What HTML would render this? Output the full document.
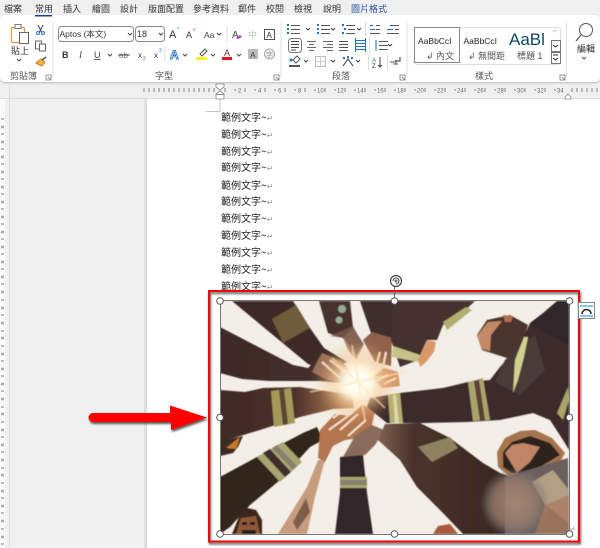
<!DOCTYPE html>
<html><head><meta charset="utf-8">
<style>
html,body{margin:0;padding:0;background:#f0f0f0}
#p{position:relative;width:600px;height:548px;overflow:hidden;background:#f0f0f0;font-family:"Liberation Sans","Noto Sans CJK TC",sans-serif}
svg{position:absolute;left:0;top:0}
text{font-family:"Liberation Sans","Noto Sans CJK TC",sans-serif}
.t{font-size:9px;fill:#333}
.g{font-size:9px;fill:#555}
.l{position:absolute;left:221px;font-size:10px;line-height:14px;color:#222;white-space:nowrap;font-family:"Noto Sans CJK TC",sans-serif}
.l i{font-style:normal;color:#999;font-size:8px}
</style></head><body><div id="p">
<div style="position:absolute;left:0;top:15px;width:600px;height:67px;background:#fff;border-radius:5px;box-shadow:0 1px 2px #bbb"></div>
<div style="position:absolute;left:146px;top:99px;width:454px;height:449px;background:#fff;border-left:1px solid #d8d8d8"></div>
<div style="position:absolute;left:144px;top:99px;width:2px;height:449px;background:#e0e0e0"></div>
<div style="position:absolute;left:9px;top:84px;width:1px;height:464px;background:#dcdcdc"></div>
<div style="position:absolute;left:0;top:98px;width:600px;height:1px;background:#dcdcdc"></div>
<div style="position:absolute;left:0;top:99px;width:5px;height:449px;background:#fafafa"></div>
<div class="l" style="top:110px">範例文字~<i>↵</i></div>
<div class="l" style="top:127px">範例文字~<i>↵</i></div>
<div class="l" style="top:144px">範例文字~<i>↵</i></div>
<div class="l" style="top:160px">範例文字~<i>↵</i></div>
<div class="l" style="top:178px">範例文字~<i>↵</i></div>
<div class="l" style="top:194px">範例文字~<i>↵</i></div>
<div class="l" style="top:211px">範例文字~<i>↵</i></div>
<div class="l" style="top:228px">範例文字~<i>↵</i></div>
<div class="l" style="top:245px">範例文字~<i>↵</i></div>
<div class="l" style="top:262px">範例文字~<i>↵</i></div>
<div class="l" style="top:279px;height:11px;overflow:hidden">範例文字~<i>↵</i></div>

<svg width="600" height="548" viewBox="0 0 600 548" xmlns="http://www.w3.org/2000/svg">
<defs>
<filter id="b1"><feGaussianBlur stdDeviation="0.6"/></filter>
<filter id="b2"><feGaussianBlur stdDeviation="2"/></filter>
<filter id="b4"><feGaussianBlur stdDeviation="5"/></filter>
<filter id="sh" x="-10%" y="-30%" width="120%" height="170%"><feDropShadow dx="1" dy="2" stdDeviation="1" flood-color="#555"/></filter>
<radialGradient id="glow"><stop offset="0" stop-color="#fffdf5"/><stop offset=".35" stop-color="#fff3d5" stop-opacity=".95"/><stop offset=".7" stop-color="#f5bd7e" stop-opacity=".45"/><stop offset="1" stop-color="#e8a060" stop-opacity="0"/></radialGradient>
<radialGradient id="flare"><stop offset="0" stop-color="#ad8a74" stop-opacity=".9"/><stop offset=".7" stop-color="#967c6e" stop-opacity=".8"/><stop offset="1" stop-color="#77757a" stop-opacity=".2"/></radialGradient>
<linearGradient id="armC" x1="0" x2="1"><stop offset="0" stop-color="#3f2a26"/><stop offset=".55" stop-color="#4b302a"/><stop offset="1" stop-color="#c08a60"/></linearGradient>
<linearGradient id="armB" x1="0" x2="1"><stop offset="0" stop-color="#3d2926"/><stop offset=".7" stop-color="#44302b"/><stop offset="1" stop-color="#96705a"/></linearGradient>
<linearGradient id="armH" x1="0" x2="1"><stop offset="0" stop-color="#806252"/><stop offset=".25" stop-color="#4b342c"/><stop offset="1" stop-color="#38251f"/></linearGradient>
<clipPath id="pic"><rect x="220" y="301" width="349" height="233"/></clipPath>
</defs>

<!-- tabs -->
<text x="4" y="12" class="t">檔案</text><text x="35" y="12" class="t">常用</text><text x="63" y="12" class="t">插入</text><text x="92" y="12" class="t">繪圖</text><text x="120" y="12" class="t">設計</text><text x="148" y="12" class="t">版面配置</text><text x="193" y="12" class="t">參考資料</text><text x="238" y="12" class="t">郵件</text><text x="266" y="12" class="t">校閱</text><text x="294" y="12" class="t">檢視</text><text x="323" y="12" class="t">說明</text><text x="351" y="12" style="font-size:9px;fill:#1c4fa8">圖片格式</text>
<rect x="35" y="15" width="17" height="1.5" fill="#1c3f94"/>

<!-- clipboard -->
<rect x="11.500" y="27.500" width="13" height="15" rx="1" fill="#fff" stroke="#e29a3c" stroke-width="1.2"/>
<rect x="15" y="24.500" width="6" height="4" fill="#fff" stroke="#777"/>
<rect x="19.500" y="32.500" width="9" height="11" fill="#fff" stroke="#666"/>
<text x="11" y="54" class="t">貼上</text><path d="M17 59l2 2 2-2" fill="none" stroke="#555"/>
<path d="M38 25l4 8M43 25l-4 8" stroke="#444" fill="none"/><circle cx="38" cy="33" r="1.5" fill="none" stroke="#2a78c8"/><circle cx="43" cy="33" r="1.5" fill="none" stroke="#2a78c8"/>
<rect x="35.500" y="41" width="6" height="8" fill="#fff" stroke="#666"/><rect x="39.500" y="44" width="6" height="7" fill="#fff" stroke="#666"/>
<path d="M36 63l5-4 4 3-3 4z" fill="#f2b24b" stroke="#d67a1e"/><path d="M42 60l4-3" stroke="#555" stroke-width="1.5"/>
<text x="10" y="79" class="g">剪貼簿</text>
<path d="M46 75h5v5h-5zM48 77l3 3" fill="none" stroke="#777" stroke-width=".8"/>
<line x1="53" y1="22" x2="53" y2="78" stroke="#e2e2e2"/>

<!-- font -->
<rect x="58.500" y="26.500" width="75" height="15" rx="3" fill="#fff" stroke="#8a8a8a"/>
<text x="59.500" y="37" style="font-size:8.500px;fill:#333">Aptos (本文)</text>
<path d="M128 33l2 2 2-2" fill="none" stroke="#444"/>
<rect x="135.500" y="26.500" width="29" height="15" rx="3" fill="#fff" stroke="#8a8a8a"/>
<text x="137" y="37" style="font-size:9px;fill:#333">18</text><path d="M159 33l2 2 2-2" fill="none" stroke="#444"/>
<text x="169" y="38" style="font-size:11px;fill:#333">A</text><text x="177" y="31" style="font-size:5px;fill:#2a78c8">^</text>
<text x="186" y="38" style="font-size:9px;fill:#333">A</text><text x="193" y="31" style="font-size:5px;fill:#2a78c8">v</text>
<text x="204" y="38" style="font-size:8.500px;fill:#444">Aa</text><path d="M217 33l2 2 2-2" fill="none" stroke="#444"/>
<line x1="227" y1="26" x2="227" y2="42" stroke="#ddd"/>
<text x="232" y="38" style="font-size:10px;fill:#444">A</text><path d="M236 38l4-3 2 2-4 2z" fill="#a23fb5"/>
<text x="248" y="38" style="font-size:9px;fill:#bbb">中</text>
<rect x="264.500" y="29.500" width="10" height="10" fill="#fff" stroke="#555"/><text x="266.500" y="38" style="font-size:8px;fill:#333">A</text>
<text x="62" y="58" style="font-size:9px;font-weight:bold;fill:#333">B</text>
<text x="79" y="58" style="font-size:9px;font-style:italic;fill:#444;font-family:'Liberation Serif'">I</text>
<text x="94" y="58" style="font-size:9px;fill:#444;text-decoration:underline">U</text><path d="M108 54l2 2 2-2" fill="none" stroke="#444"/>
<text x="119" y="58" style="font-size:8px;fill:#777">ab</text><line x1="118" y1="55" x2="130" y2="55" stroke="#444"/>
<text x="138" y="58" style="font-size:8px;fill:#333">x</text><text x="143" y="60" style="font-size:5px;fill:#2a78c8">2</text>
<text x="154" y="58" style="font-size:8px;fill:#333">x</text><text x="159" y="52" style="font-size:5px;fill:#2a78c8">2</text>
<line x1="165" y1="47" x2="165" y2="62" stroke="#ddd"/>
<text x="170" y="59" style="font-size:12px;font-weight:bold;fill:#fff;stroke:#2a78c8;stroke-width:.9">A</text><path d="M183 54l2 2 2-2" fill="none" stroke="#444"/>
<path d="M200 54l5-5 2 2-5 5z" fill="#fff" stroke="#555"/><rect x="196" y="57" width="11" height="3" fill="#ffee22"/><path d="M211 54l2 2 2-2" fill="none" stroke="#444"/>
<text x="224" y="56" style="font-size:9px;fill:#444">A</text><rect x="222" y="57" width="10" height="3" fill="#e8101c"/><path d="M237 54l2 2 2-2" fill="none" stroke="#444"/>
<rect x="248" y="49" width="10" height="10" fill="#bdbdbd"/><text x="250" y="58" style="font-size:8.500px;fill:#444">A</text>
<circle cx="269.500" cy="54" r="5" fill="#eee" stroke="#aaa"/><text x="266" y="57" style="font-size:7px;fill:#999">字</text>
<text x="155" y="79" class="g">字型</text>
<path d="M274 75h5v5h-5zM276 77l3 3" fill="none" stroke="#777" stroke-width=".8"/>
<line x1="281" y1="22" x2="281" y2="78" stroke="#e2e2e2"/>

<!-- paragraph -->
<g fill="none" stroke-width="1">
<path d="M291 25.500h9M291 29.500h9M291 33.500h9" stroke="#555"/><path d="M287 25h2M287 29h2M287 33h2" stroke="#1a73c8" stroke-width="2"/>
<path d="M321 25.500h9M321 29.500h9M321 33.500h9" stroke="#555"/><path d="M317 25h2M317 29h2M317 33h2" stroke="#1a73c8" stroke-width="2"/>
<path d="M346 25.500h9M348 29.500h7M346 33.500h9" stroke="#555"/><path d="M342 25h2M344 29h2M342 33h2" stroke="#1a73c8" stroke-width="2"/>
<path d="M331 28l2 2 2-2M306 28l2 2 2-2M357 28l2 2 2-2" stroke="#444"/>
<line x1="365.500" y1="22" x2="365.500" y2="36" stroke="#ddd"/>
<path d="M376 25.500h4M376 29.500h4M370 33.500h10M370 25.500h3" stroke="#555"/><path d="M370 29.500h5" stroke="#1a73c8"/>
<path d="M390 25.500h9M395 29.500h4M387 33.500h12" stroke="#555"/><path d="M387 29.500h6" stroke="#1a73c8"/>
<rect x="288.500" y="38.500" width="13" height="14" rx="3" fill="#fff" stroke="#777"/><path d="M291 41.500h8M291 44.500h8M291 47.500h8M291 50h5" stroke="#444"/>
<path d="M307 41.500h9M309 44.500h5M307 47.500h9M309 50.500h5" stroke="#666"/>
<path d="M323 41.500h10M327 44.500h6M323 47.500h10M327 50.500h6" stroke="#666"/>
<path d="M339 41.500h9M339 44.500h9M339 47.500h9M339 50.500h9" stroke="#555"/>
<path d="M356 40.500h9M356 43.500h9M356 46.500h9M356 49.500h9" stroke="#1a73c8"/><path d="M355.500 38v14M365.500 38v14" stroke="#1a73c8"/>
<line x1="369.500" y1="37" x2="369.500" y2="54" stroke="#ddd"/>
<path d="M379 41.500h9M379 45.500h9M379 49.500h9" stroke="#555"/><path d="M376 40v11" stroke="#1a73c8"/>
<path d="M388 44l2 2 2-2" stroke="#444"/>
<path d="M293 60l4-4 3 3-4 4z" stroke="#555"/><path d="M289 66h11" stroke="#555" stroke-width="2"/><circle cx="291" cy="60" r="1.500" fill="#1a73c8"/>
<path d="M304 60l2 2 2-2" stroke="#444"/>
<rect x="315.500" y="56.500" width="10" height="10" stroke="#bbb"/><path d="M315 61.500h11M320.500 56v11" stroke="#ccc"/>
<path d="M331 60l2 2 2-2" stroke="#444"/>
<path d="M343 66l5-7 5 7" stroke="#333"/><path d="M343 58h2M351 58h2M347 57h2" stroke="#1a73c8" stroke-width="2"/>
<path d="M356 60l2 2 2-2" stroke="#444"/>
<line x1="368.500" y1="55" x2="368.500" y2="70" stroke="#ddd"/>
<path d="M380 57v10M378 65l2 2 2-2" stroke="#444"/>
<line x1="387.500" y1="55" x2="387.500" y2="70" stroke="#ddd"/>
<path d="M390 62h5M396 60v4h-3M394 64h4" stroke="#555"/><path d="M400 57v4h-5" stroke="#333"/>
</g>
<text x="372" y="62" style="font-size:6px;fill:#1a73c8">A</text><text x="372" y="68" style="font-size:6px;fill:#333">Z</text>
<text x="332" y="79" class="g">段落</text>
<path d="M400 75h5v5h-5zM402 77l3 3" fill="none" stroke="#777" stroke-width=".8"/>
<line x1="407" y1="22" x2="407" y2="78" stroke="#e2e2e2"/>

<!-- styles -->
<rect x="414.500" y="27.500" width="146" height="37" rx="3" fill="#fff" stroke="#ddd"/>
<rect x="414.500" y="27.500" width="45" height="35" fill="#fff" stroke="#888" stroke-width="1"/>
<text x="418" y="44" style="font-size:8.500px;fill:#222">AaBbCcI</text>
<text x="463.500" y="44" style="font-size:8.500px;fill:#222">AaBbCcI</text>
<text x="509" y="45" style="font-size:17px;fill:#0f4761">AaBl</text>
<text x="426" y="59" class="g">↲ 內文</text>
<text x="468" y="59" class="g">↲ 無間距</text>
<text x="517" y="59" class="g">標題 1</text>
<path d="M553 32l2-2 2 2" fill="none" stroke="#ccc"/>
<rect x="551.500" y="40.500" width="9" height="11" fill="#fff" stroke="#777"/><path d="M553 45l2.500 2 2.500-2" fill="none" stroke="#333"/>
<rect x="551.500" y="52.500" width="9" height="11" fill="#fff" stroke="#777"/><path d="M553 55h5M553 58l2.500 2 2.500-2" fill="none" stroke="#333"/>
<text x="475" y="79" class="g">樣式</text>
<path d="M560 75h5v5h-5zM562 77l3 3" fill="none" stroke="#777" stroke-width=".8"/>
<line x1="566.500" y1="22" x2="566.500" y2="78" stroke="#e2e2e2"/>
<circle cx="586" cy="30" r="6.500" fill="#fff" stroke="#555"/><path d="M581 35l-5 6" stroke="#555" stroke-width="1.200"/>
<text x="577" y="52" class="t">編輯</text><path d="M582 57l2 2 2-2" fill="none" stroke="#555"/>

<!-- top ruler -->
<path d="M144 88v4M149 88v4M154 88v4M159 88v4M164 88v4M169 88v4M174 88v4M179 88v4M184 88v4M189 88v4M194 88v4M199 88v4M204 88v4M209 88v4M214 88v4M225 88v4M235 89v2M245 88v4M255 89v2M265 88v4M275 89v2M285 88v4M295 89v2M305 88v4M315 89v2M325 88v4M335 89v2M345 88v4M355 89v2M365 88v4M375 89v2M385 88v4M395 89v2M405 88v4M415 89v2M425 88v4M435 89v2M445 88v4M455 89v2M465 88v4M475 89v2M485 88v4M495 89v2M505 88v4M515 89v2M525 88v4M535 89v2M545 88v4M555 89v2M572 88v4M577 88v4M582 88v4M587 88v4M592 88v4M597 88v4" stroke="#666" stroke-width=".8"/>
<g style="font-size:6px;fill:#666">
<text x="238" y="92.500">2</text><text x="258" y="92.500">4</text><text x="278" y="92.500">6</text><text x="298" y="92.500">8</text><text x="317" y="92.500">10</text><text x="337" y="92.500">12</text><text x="357" y="92.500">14</text><text x="377" y="92.500">16</text><text x="397" y="92.500">18</text><text x="417" y="92.500">20</text><text x="437" y="92.500">22</text><text x="457" y="92.500">24</text><text x="477" y="92.500">26</text><text x="497" y="92.500">28</text><text x="517" y="92.500">30</text><text x="537" y="92.500">32</text><text x="557" y="92.500">34</text>
</g>
<path d="M216 84h8v3l-4 3-4-3zM216 99v-5l4-3 4 3v5z" fill="#fff" stroke="#888" stroke-width=".8"/><line x1="216" y1="94.500" x2="224" y2="94.500" stroke="#888"/>
<path d="M565 97l3-3 3 3v2h-6z" fill="#fff" stroke="#888" stroke-width=".8"/>
<path d="M205.500 111.500h14.500v-12" fill="none" stroke="#c4c4c4"/>
<!-- left ruler -->
<path d="M1 119h3M1 134h3M1 149h3M1 164h3M1 179h3M1 194h3M1 209h3M1 224h3M1 239h3M1 254h3M1 269h3M1 284h3M1 300h3M1 315h3M1 331h3M1 346h3M1 361h3M1 376h3M1 391h3M1 407h3M1 422h3M1 437h3M1 452h3M1 468h3M1 483h3M1 498h3M1 513h3M1 529h3M1 544h3" stroke="#555" stroke-width=".8"/>
<path d="M1 127h3M1 142h3M1 157h3M1 172h3M1 187h3M1 202h3M1 217h3M1 232h3M1 247h3M1 262h3M1 277h3M1 292h3M1 308h3M1 323h3M1 338h3M1 354h3M1 369h3M1 384h3M1 399h3M1 414h3M1 430h3M1 445h3M1 460h3M1 475h3M1 491h3M1 506h3M1 521h3M1 537h3" stroke="#aaa" stroke-width="2.500"/>

<!-- photo -->
<g clip-path="url(#pic)">
<rect x="220" y="301" width="349" height="233" fill="#f3efe8"/>
<g filter="url(#b1)">
<!-- top-left arm A -->
<path d="M232 301L293 301 310 328 324 348 347 362 330 372 308 364Z" fill="#3e2a27"/>
<path d="M272 319L296 305 310 328 283 343Z" fill="#6e5c3a"/>
<!-- arm B -->
<path d="M220 327L293 365 308 368 322 354 345 366 352 384 320 381 270 381 242 379 220 373Z" fill="url(#armB)"/>
<path d="M322 353L340 360 352 372 345 384 328 380 312 372Z" fill="#9a7058"/>
<!-- arm C -->
<path d="M220 390L245 392 263 388 300 387 352 395 354 408 333 409 300 417 260 430 220 442Z" fill="url(#armC)"/>
<path d="M271 391L291 388 295 423 274 427Z" fill="#a39a5a"/><path d="M279 390L284 389 288 424 283 425Z" fill="#5c4530"/>
<!-- small helmet left -->
<path d="M220 441L243 436 238 447 233 453 220 456Z" fill="#3e2a24"/><path d="M226 448L240 437 236 449Z" fill="#c87b2a"/>
<!-- arm D -->
<path d="M220 477L257 457 303 433 317 427 323 440 310 447 280 480 250 505 230 527 220 534Z" fill="#33251f"/>
<path d="M257 457L283 442 302 462 280 482Z" fill="#a8a66e"/>
<path d="M263 453L270 449 291 472 285 477Z" fill="#3f2f2b"/><path d="M272 448L277 445 297 466 293 470Z" fill="#8a7f6e"/>
<!-- helmet man bottom-left -->
<path d="M232 534L243 507 256 510 262 520 262 534Z" fill="#3a271f"/><path d="M236 534L241 518 256 516 260 534Z" fill="#8e5838"/><path d="M242 522h5v3h-5zM250 522h5v3h-5zM242 530h14v4h-14z" fill="#2b1c16"/>
<!-- forearm -->
<path d="M278 534L307 487 318 460 325 460 323 467 315 497 307 534Z" fill="#c79c7c"/>
<path d="M293 522L306 498 310 512 297 530Z" fill="#7d5d48"/>
<!-- lower hands -->
<path d="M318 458L320 430 335 414 350 416 362 405 375 410 372 425 360 438 345 440 333 446 325 462Z" fill="#b3744e"/>
<path d="M343 457L355 436 372 425 384 430 375 445 365 455Z" fill="#8a6a58"/>
<path d="M340 457L363 455 367 493 373 534 335 534 340 493Z" fill="#302829"/>
<rect x="340" y="477" width="27" height="11" fill="#a9a66c"/><rect x="340" y="480" width="27" height="5" fill="#85806e"/>
<!-- arm E top -->
<path d="M319 301H350L353 328 363 345 355 358 343 338 328 333Z" fill="#46322d"/>
<path d="M343 338L353 328 364 344 356 360 348 350Z" fill="#b08a70"/>
<path d="M330 336L353 326 363 344 356 356 344 338Z" fill="#77594a" opacity=".8"/>
<!-- arm F / hand -->
<path d="M360 301H393L398 325 392 340 372 336Z" fill="#3f2d2a"/>
<path d="M363 340L372 332 392 338 391 366 375 362Z" fill="#8f604b"/>
<!-- arm G -->
<path d="M393 301H475L460 315 443 325 437 340 427 340 418 360 400 367 391 340Z" fill="#45322f"/>
<path d="M393 346L420 355 418 362 392 357Z" fill="#c6c288"/>
<path d="M443 322L466 307 472 310 447 330Z" fill="#b1ae70"/>
<path d="M418 360L427 340 436 342 434 352 426 362 420 367Z" fill="#d8986a"/>
<path d="M372 378L384 368 398 372 400 386 382 388Z" fill="#d59768"/>
<!-- head -->
<path d="M477 335L487 320 510 315 528 325 522 345 507 358 482 350Z" fill="#4a342d"/>
<path d="M477 336L488 322 502 321 491 335 490 351 482 349Z" fill="#c48a68"/>
<path d="M503 315L513 316 511 322 505 322Z" fill="#b56d50"/>
<!-- body and arm I -->
<path d="M557 301L543 313 530 323 520 345 500 367 490 380 468 382 443 388 400 393 370 398 367 407 387 423 423 423 467 422 500 420 533 413 550 420 563 440 569 450 569 301Z" fill="#3c2a29"/>
<path d="M530 323L545 313 558 301 569 301 569 345 540 330Z" fill="#33282a"/>
<path d="M505 360L520 345 535 335 545 370 520 395 495 382Z" fill="#4a3a39"/>
<path d="M528 337L524 357 518 380 513 393 515 360 524 337Z" fill="#d2d08e"/>
<path d="M568 387L557 413 563 420 569 400Z" fill="#a9a56a"/>
<path d="M388 395L400 393 403 423 390 423Z" fill="#b3ae72"/><path d="M393 395L396 395 399 423 395 423Z" fill="#ddd9a8"/>
<path d="M468 382L483 378 490 420 473 421Z" fill="#a9a56a"/><path d="M474 381L479 380 485 420 480 421Z" fill="#5a4035"/>
<!-- arm H -->
<path d="M385 424L420 423 450 438 483 463 500 473 512 477 505 534 463 534 443 513 417 487 400 460 378 440Z" fill="url(#armH)"/>
<path d="M418 447L450 437 458 448 432 462Z" fill="#8e8260"/>
<!-- helmet lower right -->
<path d="M498 467L497 452 505 438 520 431 535 430 552 438 565 453 560 462 530 475 510 477Z" fill="#a6754e"/>
<path d="M503 467L503 452 512 442 530 436 550 443 560 455 530 473 512 473Z" fill="#2e211c"/>
<path d="M505 453L512 445 523 443 540 447 530 462 517 473Z" fill="#c08468"/>
<path d="M505 477L568 458 569 534 505 534Z" fill="#6c605e"/>
<path d="M532 482L553 470 569 490 569 523 545 505Z" fill="#b3a084"/>
<path d="M433 534L438 526 450 524 458 534Z" fill="#a95a3a"/>
<!-- lens flare -->
<circle cx="515" cy="503" r="33" fill="url(#flare)" filter="url(#b2)"/>
<path d="M545 505L569 495V534H535Z" fill="#a97a5e" opacity=".75"/>
<circle cx="342" cy="309" r="4" fill="#a7c1a6" opacity=".85"/>
<circle cx="339" cy="320" r="3.500" fill="#a7c1a6" opacity=".85"/>
<!-- fingers -->
<g stroke="#f7e7d3" stroke-width="2" fill="none">
<path d="M333 418L344 410M329 430L348 416M340 430L358 414M348 436L366 420"/>
<path d="M376 366L380 352M383 367L386 352"/>
<path d="M376 381L388 375M384 384L396 378"/>
<path d="M330 360L345 372M322 362L340 378"/>
</g>
</g>
<circle cx="357" cy="382" r="40" fill="url(#glow)" filter="url(#b4)"/>
<circle cx="357" cy="382" r="15" fill="#fffdf4" filter="url(#b4)"/>
<path d="M310 392L405 372M352 345L365 420M332 358L385 408" stroke="#ffe6b5" stroke-width="2" opacity=".6" filter="url(#b1)"/>
</g>

<!-- selection -->
<rect x="220.500" y="300.500" width="349" height="234" fill="none" stroke="#777" stroke-width="1"/>
<line x1="394.500" y1="286" x2="394.500" y2="300" stroke="#666"/>
<circle cx="396" cy="281" r="5.500" fill="#fff" stroke="#444" stroke-width="1.200"/><path d="M393 281a3 3 0 1 1 3 3" fill="none" stroke="#444"/><circle cx="396" cy="281" r="1.500" fill="#777"/>
<path d="M577 527v3h-5M577 530l-5 0" fill="none" stroke="#aaa" transform="translate(-3 -1)"/>
<!-- red frame -->
<rect x="210" y="292" width="368" height="249" fill="none" stroke="#7fd0d0" stroke-width="1" opacity=".6"/>
<rect x="209" y="291" width="370" height="250.500" fill="none" stroke="#ff0000" stroke-width="2" filter="url(#sh)"/>
<g fill="#fff" stroke="#555" stroke-width="1">
<circle cx="220" cy="301" r="3.300"/><circle cx="394.500" cy="301" r="3.300"/><circle cx="569.500" cy="301" r="3.300"/>
<circle cx="220" cy="417.500" r="3.300"/><circle cx="569.500" cy="417.500" r="3.300"/>
<circle cx="220" cy="534" r="3.300"/><circle cx="394.500" cy="534" r="3.300"/><circle cx="569.500" cy="534" r="3.300"/>
</g>
<!-- layout button -->
<rect x="578.500" y="302.500" width="16" height="16" fill="#fff" stroke="#888"/>
<path d="M580 306h13M580 316h13" stroke="#8cc4e8" stroke-width="2"/><path d="M582 314a4.500 4.500 0 0 1 9 0" fill="none" stroke="#222" stroke-width="1.500"/>
<!-- arrow -->
<path d="M93 413H170V405.500L207 417.500 171 430V422H93a4.500 4.500 0 0 1 0-9Z" fill="#ff0000" filter="url(#sh)"/>
</svg>
</div></body></html>
